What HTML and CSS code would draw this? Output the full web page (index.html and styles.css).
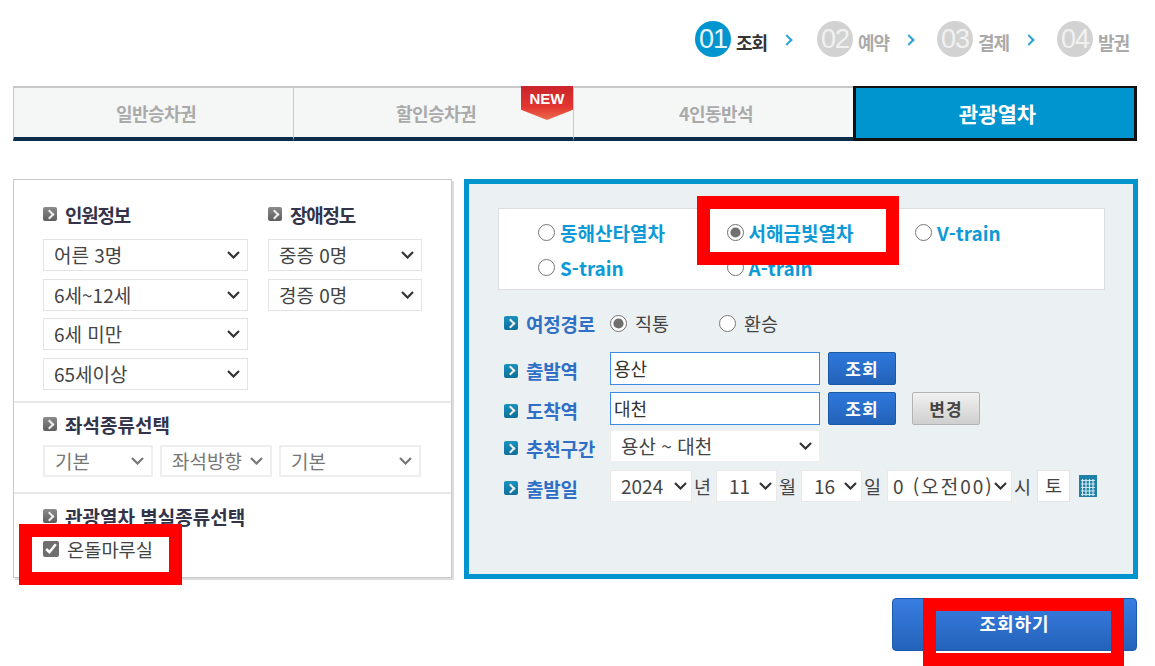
FILE: index.html
```html
<!DOCTYPE html>
<html lang="ko">
<head>
  <meta charset="utf-8">
  <title>관광열차 조회</title>
  <link rel="stylesheet" href="styles.css">
</head>
<body>
  <div class="page">
    <ol class="steps">
      <li class="step step-on"><span class="step-num">01</span><span class="step-name">조회</span><span class="step-arrow"></span></li>
      <li class="step"><span class="step-num">02</span><span class="step-name">예약</span><span class="step-arrow"></span></li>
      <li class="step"><span class="step-num">03</span><span class="step-name">결제</span><span class="step-arrow"></span></li>
      <li class="step step-last"><span class="step-num">04</span><span class="step-name">발권</span></li>
    </ol>

    <nav class="tabs">
      <a class="tab">일반승차권</a>
      <a class="tab">할인승차권<span class="new-badge">NEW</span></a>
      <a class="tab">4인동반석</a>
      <a class="tab tab-on">관광열차</a>
    </nav>

    <div class="panels">
      <section class="left-panel">
        <div class="left-group group-people">
          <div class="people-col">
            <h3 class="left-title"><i class="bullet"></i>인원정보</h3>
            <select class="sel sel-main"><option>어른 3명</option></select>
            <select class="sel sel-main"><option>6세~12세</option></select>
            <select class="sel sel-main sel-pull"><option>6세 미만</option></select>
            <select class="sel sel-main"><option>65세이상</option></select>
          </div>
          <div class="people-col">
            <h3 class="left-title"><i class="bullet"></i>장애정도</h3>
            <select class="sel sel-side"><option>중증 0명</option></select>
            <select class="sel sel-side"><option>경증 0명</option></select>
          </div>
        </div>
        <div class="left-group group-seat">
          <h3 class="left-title"><i class="bullet"></i>좌석종류선택</h3>
          <div class="seat-row">
            <select class="sel seat-a" disabled><option>기본</option></select>
            <select class="sel seat-b" disabled><option>좌석방향</option></select>
            <select class="sel seat-c" disabled><option>기본</option></select>
          </div>
        </div>
        <div class="left-group group-room">
          <h3 class="left-title"><i class="bullet"></i>관광열차 별실종류선택</h3>
          <label class="check-line"><input type="checkbox" checked>온돌마루실</label>
        </div>
      </section>

      <section class="right-panel">
        <div class="train-box">
          <label class="train"><input type="radio" name="train">동해산타열차</label>
          <label class="train"><input type="radio" name="train" checked>서해금빛열차</label>
          <label class="train"><input type="radio" name="train">V-train</label>
          <label class="train"><input type="radio" name="train">S-train</label>
          <label class="train"><input type="radio" name="train">A-train</label>
        </div>

        <div class="form-rows">
          <div class="form-row row-route">
            <span class="form-label"><i class="bullet bullet-blue"></i>여정경로</span>
            <label class="route"><input type="radio" name="route" checked>직통</label>
            <label class="route"><input type="radio" name="route">환승</label>
          </div>
          <div class="form-row">
            <span class="form-label"><i class="bullet bullet-blue"></i>출발역</span>
            <input class="station" type="text" value="용산">
            <button class="btn btn-blue" type="button">조회</button>
          </div>
          <div class="form-row">
            <span class="form-label"><i class="bullet bullet-blue"></i>도착역</span>
            <input class="station" type="text" value="대천">
            <button class="btn btn-blue" type="button">조회</button>
            <button class="btn btn-gray" type="button">변경</button>
          </div>
          <div class="form-row row-section">
            <span class="form-label"><i class="bullet bullet-blue"></i>추천구간</span>
            <select class="sel sel-section"><option>용산 ~ 대천</option></select>
          </div>
          <div class="form-row row-date">
            <span class="form-label"><i class="bullet bullet-blue"></i>출발일</span>
            <select class="sel sel-year"><option>2024</option></select><span class="unit">년</span>
            <select class="sel sel-day"><option>11</option></select><span class="unit">월</span>
            <select class="sel sel-day"><option>16</option></select><span class="unit unit-wide">일</span>
            <select class="sel sel-hour"><option>0 (오전00)</option></select><span class="unit unit-wide">시</span>
            <span class="weekday">토</span>
            <svg class="calendar" width="18" height="22" viewBox="0 0 18 22">
              <rect width="18" height="22" fill="#1f7fa6"/>
              <path d="M2 5.500h14M2 9h14M2 12.500h14M2 16h14M2 19.500h14M3.500 4v17M7 4v17M10.500 4v17M14 4v17" stroke="#cfe6ef" stroke-width="1.200"/>
            </svg>
          </div>
        </div>
      </section>
    </div>

    <div class="actions">
      <button class="search-btn" type="button">조회하기</button>
    </div>
  </div>

  <!-- red marks drawn over the screen capture -->
  <div class="mark mark-room"></div>
  <div class="mark mark-train"></div>
  <div class="mark mark-search"></div>
</body>
</html>
```

FILE: styles.css
```css
html, body {
  margin: 0;
  height: 100%;
}

body {
  position: relative;
  overflow: hidden;
  background-color: #fff;
  color: #333;
  font-family: "Noto Sans CJK KR", "Noto Sans", sans-serif;
}

.page {
  width: 1125px;
  margin-left: 13px;
}

/* steps */
.steps {
  display: flex;
  justify-content: flex-end;
  height: 86px;
  margin: 0;
  padding: 21px 0 0 0;
  box-sizing: border-box;
  list-style: none;
}

.step {
  display: flex;
  align-items: flex-start;
  width: 120px;
}

.step-on {
  width: 122px;
}

.step-last {
  width: 81px;
}

.step-num {
  flex: none;
  width: 36px;
  height: 36px;
  border-radius: 50%;
  background-color: #d2d2d2;
  color: #f1f1f1;
  font-family: "Liberation Sans", sans-serif;
  font-size: 27px;
  line-height: 36px;
  letter-spacing: -1px;
  text-align: center;
}

.step-name {
  width: 45px;
  margin-left: 5px;
  color: #aaa;
  font-size: 18px;
  font-weight: 700;
  line-height: 42px;
  letter-spacing: -1px;
}

.step-arrow {
  width: 6px;
  height: 6px;
  margin: 15px 0 0 2px;
  border-top: 2px solid #2ea3d5;
  border-right: 2px solid #2ea3d5;
  transform: rotate(45deg);
}

.step-on .step-num {
  background-color: #0095cf;
  color: #e6f5fb;
}

.step-on .step-name {
  color: #333;
}

/* tabs */
.tabs {
  display: grid;
  grid-template-columns: 280px 280px 280px 284px;
  height: 55px;
}

.tab {
  position: relative;
  display: flex;
  align-items: center;
  justify-content: center;
  box-sizing: border-box;
  padding-left: 5px;
  border-top: 2px solid #c8c8c8;
  border-left: 1px solid #c8c8c8;
  border-bottom: 4px solid #0c2c4c;
  background-color: #f5f7f7;
  color: #aaa;
  font-size: 18px;
  font-weight: 700;
  letter-spacing: -.6px;
}

.tab-on {
  border: 3px solid #111;
  border-top-width: 2px;
  background-color: #0095cf;
  color: #fff;
  font-size: 21px;
  letter-spacing: 0;
}

.new-badge {
  position: absolute;
  top: -2px;
  right: 0;
  width: 52px;
  height: 34px;
  padding-top: 3px;
  box-sizing: border-box;
  background: linear-gradient(#c9252b, #e2352f 60%, #ee6a4d);
  clip-path: polygon(0 0, 100% 0, 100% 70%, 50% 100%, 0 70%);
  color: #fff;
  font-family: "Liberation Sans", sans-serif;
  font-size: 15px;
  font-weight: 700;
  line-height: 20px;
  letter-spacing: 0;
  text-align: center;
}

/* panels */
.panels {
  display: flex;
  justify-content: space-between;
  align-items: flex-start;
  margin-top: 38px;
}

.left-panel {
  width: 439px;
  height: 399px;
  box-sizing: border-box;
  border: 1px solid #c9c9c9;
  box-shadow: 2px 2px 0 #ddd;
}

.left-group {
  padding-left: 29px;
  border-bottom: 2px solid #e8e8e8;
}

.group-people {
  display: flex;
  gap: 20px;
  height: 223px;
  padding-top: 22px;
  box-sizing: border-box;
}

.group-seat {
  height: 91px;
  padding-top: 9px;
  box-sizing: border-box;
}

.group-room {
  padding-top: 10px;
  border-bottom: 0;
}

.people-col {
  display: flex;
  flex-direction: column;
  align-items: flex-start;
  gap: 8px;
}

.left-title {
  display: flex;
  align-items: center;
  height: 24px;
  margin: 0;
  color: #33334a;
  font-size: 19px;
  font-weight: 700;
  white-space: nowrap;
}

.people-col .left-title {
  margin-bottom: 5px;
  letter-spacing: -1.200px;
}

.bullet {
  position: relative;
  flex: none;
  width: 14px;
  height: 14px;
  margin-right: 8px;
  border-radius: 2px;
  background: linear-gradient(#8b8b8b, #5e5e5e);
}

.bullet::after {
  content: "";
  position: absolute;
  top: 3.500px;
  left: 2.500px;
  width: 5px;
  height: 5px;
  border-top: 2px solid #eee;
  border-right: 2px solid #eee;
  transform: rotate(45deg);
}

.bullet-blue {
  background: linear-gradient(#1a92bf, #0d6f98);
}

.sel {
  appearance: none;
  height: 32px;
  box-sizing: border-box;
  padding: 0 20px 2px 10px;
  border: 1px solid #e3e3e3;
  border-radius: 0;
  background: #fff url("data:image/svg+xml,%3Csvg xmlns='http://www.w3.org/2000/svg' width='13' height='8'%3E%3Cpath d='M1 1l5.500 5.500L12 1' fill='none' stroke='%23333' stroke-width='2.200'/%3E%3C/svg%3E") no-repeat right 7px center;
  color: #444;
  font-family: "Noto Sans CJK KR", sans-serif;
  font-size: 19px;
}

.sel-main {
  width: 205px;
}

.sel-pull {
  margin-top: -1px;
}

.sel-side {
  width: 154px;
}

.seat-row {
  display: flex;
  gap: 7px;
  margin-top: 9px;
}

.seat-a {
  width: 110px;
}

.seat-b {
  width: 112px;
}

.seat-c {
  width: 142px;
}

.sel:disabled {
  border-width: 2px;
  border-color: #eee;
  background-image: url("data:image/svg+xml,%3Csvg xmlns='http://www.w3.org/2000/svg' width='13' height='8'%3E%3Cpath d='M1 1l5.500 5.500L12 1' fill='none' stroke='%23777' stroke-width='2.200'/%3E%3C/svg%3E");
  color: #777;
  opacity: 1;
}

.check-line {
  display: flex;
  align-items: center;
  gap: 8px;
  margin-top: 9px;
  color: #444;
  font-size: 18.700px;
  line-height: 24px;
}

.check-line input {
  width: 16px;
  height: 16px;
  margin: 0;
  accent-color: #6e6e6e;
}

.right-panel {
  width: 674px;
  height: 400px;
  box-sizing: border-box;
  border: 5px solid #0095cf;
  padding: 24px 28px 0 29px;
  background-color: #ebf0f3;
}

.train-box {
  display: grid;
  grid-template-columns: repeat(3, 188.500px);
  grid-auto-rows: 35px;
  align-items: center;
  height: 82px;
  padding: 6px 0 0 39px;
  box-sizing: border-box;
  border: 1px solid #dcdfe1;
  background-color: #fff;
}

.train {
  display: flex;
  align-items: center;
  gap: 5px;
  color: #0e9ad6;
  font-size: 19px;
  font-weight: 700;
  line-height: 24px;
}

.train input,
.route input {
  width: 17px;
  height: 17px;
  margin: 0;
  accent-color: #707070;
}

.form-rows {
  display: flex;
  flex-direction: column;
  gap: 7px;
  margin-top: 17px;
  padding-left: 6px;
}

.form-row {
  display: flex;
  align-items: center;
  min-height: 32px;
}

.row-route {
  margin-bottom: 6px;
}

.row-section {
  margin-top: -2px;
}

.row-date {
  margin-top: 1px;
}

.form-label {
  display: flex;
  align-items: center;
  flex: none;
  width: 106px;
  padding-top: 4px;
  color: #2f6fc6;
  font-size: 19px;
  font-weight: 700;
  letter-spacing: -.2px;
}

.row-route .form-label {
  padding-top: 0;
}

.route {
  display: flex;
  align-items: center;
  gap: 8px;
  width: 109px;
  color: #444;
  font-size: 18.500px;
}

.station {
  width: 210px;
  height: 33px;
  padding: 0 3px 2px;
  box-sizing: border-box;
  border: 1px solid #3d8ce0;
  background-color: #fff;
  color: #333;
  font-family: "Noto Sans CJK KR", sans-serif;
  font-size: 18px;
}

.btn {
  height: 33px;
  width: 68px;
  padding: 0;
  border-radius: 2px;
  font-family: "Noto Sans CJK KR", sans-serif;
  font-size: 17px;
  font-weight: 700;
  letter-spacing: 1px;
}

.btn-blue {
  margin-left: 8px;
  border: 1px solid #1b5aa8;
  background: linear-gradient(#2f78dc, #2263b9);
  color: #fff;
}

.btn-gray {
  margin-left: 16px;
  border: 1px solid #b3b3b3;
  background: linear-gradient(#f1f1f1, #cfcfcf);
  color: #444;
}

.sel-section {
  width: 210px;
  border-color: #eee;
}

.sel-year {
  width: 82px;
}

.sel-day {
  width: 61px;
  padding-left: 12px;
}

.sel-hour {
  width: 125px;
  padding-left: 5px;
  letter-spacing: 2px;
}

.row-date .sel {
  padding-right: 0;
  border-color: #e9e9e9;
  background-position: right 4px center;
}

.unit {
  width: 24px;
  padding-left: 2px;
  box-sizing: border-box;
  color: #444;
  font-size: 18.500px;
}

.unit-wide {
  width: 25px;
}

.weekday {
  width: 33px;
  height: 32px;
  box-sizing: border-box;
  border: 1px solid #e3e3e3;
  background-color: #fff;
  color: #444;
  font-size: 18.500px;
  line-height: 28px;
  text-align: center;
}

.calendar {
  margin-left: 9px;
}

/* bottom button */
.actions {
  display: flex;
  justify-content: flex-end;
  margin-top: 19px;
}

.search-btn {
  width: 245px;
  height: 53px;
  margin-right: 1px;
  padding: 0 0 3px;
  border: 1px solid #1b5aa8;
  border-radius: 4px;
  background: linear-gradient(#3a7de2, #2363ba);
  color: #fff;
  font-family: "Noto Sans CJK KR", sans-serif;
  font-size: 18px;
  font-weight: 700;
  letter-spacing: 1px;
}

/* red marks */
.mark {
  position: absolute;
  box-sizing: border-box;
  border: 13px solid #f00;
}

.mark-room {
  left: 19px;
  top: 524px;
  width: 163px;
  height: 61px;
}

.mark-train {
  left: 697px;
  top: 196px;
  width: 202px;
  height: 69px;
}

.mark-search {
  left: 923px;
  top: 598px;
  width: 201px;
  height: 68px;
}
```
